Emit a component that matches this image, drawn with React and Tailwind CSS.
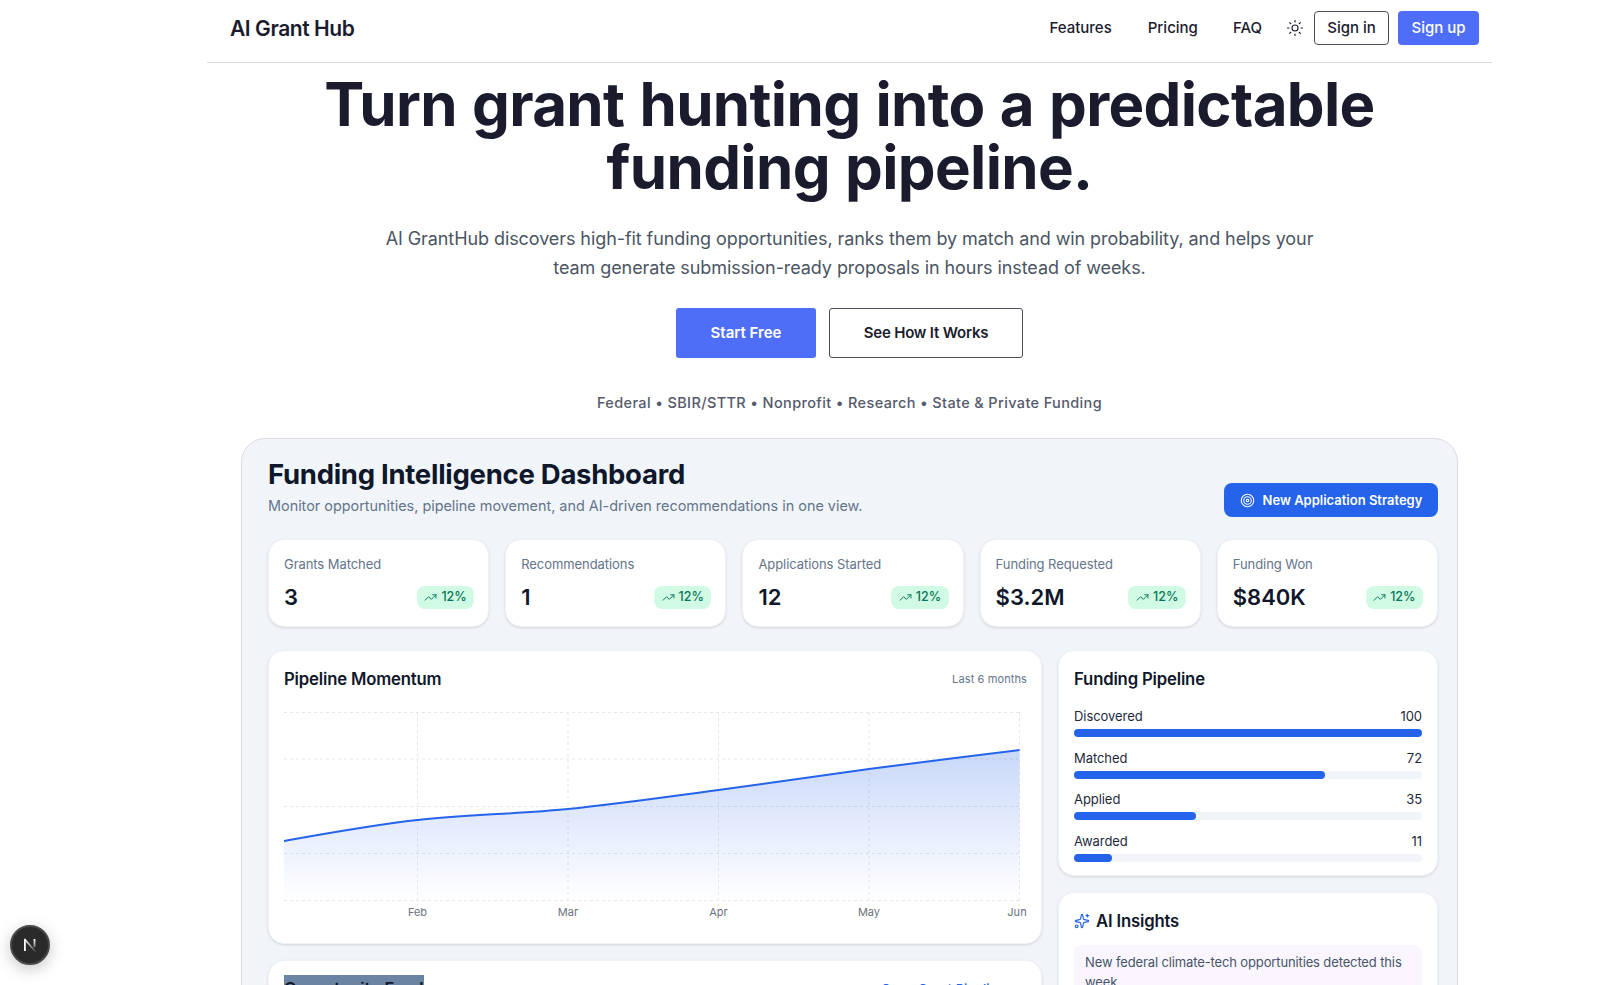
import React from "react";
import { Sun, TrendingUp, Target, Sparkles, ArrowRight } from "lucide-react";

const stats = [
  ["Grants Matched", "3"],
  ["Recommendations", "1"],
  ["Applications Started", "12"],
  ["Funding Requested", "$3.2M"],
  ["Funding Won", "$840K"],
];
const pipe = [
  ["Discovered", 100],
  ["Matched", 72],
  ["Applied", 35],
  ["Awarded", 11],
];

function Stat({ label, value }) {
  return (
    <div className="h-[88px] rounded-2xl bg-white border border-[#eef2f7] shadow-sm pl-[15px] pr-[14px] pt-[15px]">
      <div className="text-[13px] leading-[18px] tracking-[-0.005em] text-[#64748b]">{label}</div>
      <div className="mt-[9px] flex items-center justify-between">
        <div className="text-[22px] leading-[30px] font-semibold text-[#0f172a]">{value}</div>
        <div className="flex h-[23px] items-center gap-[4px] rounded-lg bg-[#d1fae5] px-[7.5px] text-[12.5px] font-medium text-[#047857]">
          <TrendingUp size={13} strokeWidth={1.75} />
          12%
        </div>
      </div>
    </div>
  );
}

function Chart() {
  const xs = [417.5, 568, 718.5, 869, 1019.5].map((x) => x - 284);
  const ys = [47, 94.5, 141.5, 188.5];
  const line =
    "M0 129 C44.5 121 89 112.9 133.5 108 C183.7 102.5 233.8 102 284 97 C334.2 92 384.3 84.7 434.5 78 C484.7 71.3 534.8 63.8 585 57 C635.2 50.2 685.3 44.3 735.5 38";
  return (
    <svg width="760" height="210" className="mt-[20px] block overflow-visible">
      <defs>
        <linearGradient id="fillArea" x1="0" y1="0" x2="0" y2="1">
          <stop offset="0%" stopColor="#2563eb" stopOpacity="0.25" />
          <stop offset="100%" stopColor="#2563eb" stopOpacity="0" />
        </linearGradient>
      </defs>
      <g stroke="#e5e7eb" strokeDasharray="3 3" fill="none">
        <line x1="0" x2="735.5" y1="0.5" y2="0.5" />
        {ys.map((y) => (
          <line key={y} x1="0" x2="735.5" y1={y} y2={y} />
        ))}
        {xs.map((x) => (
          <line key={x} x1={x} x2={x} y1="0" y2="194" />
        ))}
      </g>
      <path d={line + " L735.5 188.5 L0 188.5 Z"} fill="url(#fillArea)" />
      <path d={line} fill="none" stroke="#2563eb" strokeWidth="2" />
      <g fill="#6b7280" fontSize="11" textAnchor="middle" fontFamily="Inter, sans-serif">
        <text x="133.5" y="204">Feb</text>
        <text x="284" y="204">Mar</text>
        <text x="434.5" y="204">Apr</text>
        <text x="585" y="204">May</text>
        <text x="733" y="204">Jun</text>
      </g>
    </svg>
  );
}

function NextBadge() {
  return (
    <div className="fixed left-[10px] top-[925px] flex h-[40px] w-[40px] items-center justify-center rounded-full border-2 border-[#4a4a4a] bg-[#2a2a2a] shadow-[0_4px_16px_rgba(0,0,0,0.22)]">
      <svg width="20" height="20" viewBox="0 0 20 20" fill="none">
        <defs>
          <linearGradient id="nDiag" x1="5" y1="4" x2="15" y2="16" gradientUnits="userSpaceOnUse">
            <stop offset="0%" stopColor="#fff" />
            <stop offset="100%" stopColor="#fff" stopOpacity="0.15" />
          </linearGradient>
          <linearGradient id="nRight" x1="14" y1="4" x2="14" y2="12" gradientUnits="userSpaceOnUse">
            <stop offset="0%" stopColor="#fff" />
            <stop offset="100%" stopColor="#fff" stopOpacity="0.4" />
          </linearGradient>
        </defs>
        <path d="M4.9 16V4" stroke="#fff" strokeWidth="1.8" />
        <path d="M4.4 4 L15.5 16.5" stroke="url(#nDiag)" strokeWidth="1.8" />
        <path d="M14.5 4V12" stroke="url(#nRight)" strokeWidth="1.8" />
      </svg>
    </div>
  );
}

export default function App() {
  return (
    <div className="relative h-[985px] overflow-hidden bg-white font-['Inter',sans-serif] text-[#1a1c2e]">
      <div className="ml-[207px] w-[1285px]">
        <header className="flex h-[63px] items-center justify-between border-b border-[#d9d9dc] pb-[7px] pl-[23px] pr-[13px]">
          <div className="mt-[2px] text-[21px] font-semibold tracking-[-0.02em]">AI Grant Hub</div>
          <div className="flex items-center text-[15px] font-medium">
            <a className="pt-[2px]">Features</a>
            <a className="ml-[36px] pt-[2px]">Pricing</a>
            <a className="ml-[35px] pt-[2px]">FAQ</a>
            <Sun size={18} strokeWidth={1.5} className="ml-[24px]" />
            <button className="ml-[10px] h-[34px] w-[75px] rounded-[4px] border border-[#4b4d5e] pt-[1px]">Sign in</button>
            <button className="ml-[9px] h-[34px] w-[81px] rounded-[4px] bg-[#4f6ef7] pt-[1px] text-white">Sign up</button>
          </div>
        </header>

        <section className="flex flex-col items-center">
          <h1 className="mt-[10px] w-[1100px] text-center text-[60px] font-bold leading-[63px] tracking-[-0.65px] [word-spacing:1.5px]">
            Turn grant hunting into a predictable funding pipeline.
          </h1>
          <p className="mt-[25px] w-[960px] text-center text-[18px] leading-[29px] tracking-[-0.08px] text-[#4b5563]">
            AI GrantHub discovers high-fit funding opportunities, ranks them by match and win probability, and helps your team generate submission-ready proposals in hours instead of weeks.
          </p>
          <div className="mt-[26px] flex gap-[13px]">
            <button className="h-[50px] w-[140px] rounded-[3px] bg-[#4f6ef7] text-[15px] font-semibold text-white">Start Free</button>
            <button className="h-[50px] w-[194px] rounded-[3px] border border-[#4b4d5e] text-[15px] font-semibold tracking-[-0.2px]">See How It Works</button>
          </div>
          <div className="mt-[36px] text-[14.5px] font-medium leading-[18px] tracking-[0.025em] text-[#555a6b]">
            Federal • SBIR/STTR • Nonprofit • Research • State &amp; Private Funding
          </div>
        </section>

        <section className="ml-[34px] mt-[26px] w-[1217px] rounded-3xl border border-[#d9dde3] bg-[#f1f5f9] pl-[26px] pr-[19px] pt-[18px]">
          <div className="flex items-end justify-between">
            <div>
              <h2 className="text-[27.5px] font-bold leading-[34px] tracking-[-0.01em] text-[#0f172a]">Funding Intelligence Dashboard</h2>
              <p className="mt-[4px] text-[14.4px] leading-[22px] text-[#64748b]">Monitor opportunities, pipeline movement, and AI-driven recommendations in one view.</p>
            </div>
            <button className="flex h-[34px] w-[214px] items-center justify-center gap-[8px] rounded-lg bg-[#2563eb] pt-[1px] text-[13px] font-semibold text-white">
              <Target size={15} strokeWidth={1.75} />
              New Application Strategy
            </button>
          </div>

          <div className="mt-[22px] grid grid-cols-5 gap-[16px]">
            {stats.map(([l, v]) => (
              <Stat key={l} label={l} value={v} />
            ))}
          </div>

          <div className="mt-[23px] grid grid-cols-[774px_380px] gap-[16px]">
            <div className="flex flex-col gap-[16px]">
              <div className="h-[294px] rounded-2xl border border-[#eef2f7] bg-white pl-[15px] pr-[14px] pt-[15px] shadow-sm">
                <div className="flex items-center justify-between">
                  <div className="text-[16.7px] font-semibold leading-[26px] tracking-[-0.01em] text-[#0f172a]">Pipeline Momentum</div>
                  <div className="text-[11px] tracking-[0.01em] text-[#64748b]">Last 6 months</div>
                </div>
                <Chart />
              </div>
              <div className="h-[200px] rounded-2xl border border-[#eef2f7] bg-white pl-[15px] pr-[14px] pt-[14px] shadow-sm">
                <div className="flex items-start justify-between">
                  <div className="bg-[#6b84a3] text-[16.5px] font-semibold leading-[26px] text-[#0f172a]">Opportunity Feed</div>
                  <div className="flex items-center gap-[8px] pt-[5px] text-[13px] font-medium text-[#2563eb]">
                    Open Grant Pipeline
                    <ArrowRight size={14} />
                  </div>
                </div>
              </div>
            </div>

            <div className="flex flex-col gap-[16px]">
              <div className="h-[226px] rounded-2xl border border-[#eef2f7] bg-white pl-[15px] pr-[15px] pt-[15px] shadow-sm">
                <div className="text-[16.7px] font-semibold leading-[26px] tracking-[-0.01em] text-[#0f172a]">Funding Pipeline</div>
                <div className="mt-[15px] flex flex-col gap-[11.5px]">
                  {pipe.map(([n, v]) => (
                    <div key={n}>
                      <div className="flex justify-between text-[13px] leading-[18px] tracking-[-0.005em] text-[#1e293b]">
                        <span>{n}</span>
                        <span>{v}</span>
                      </div>
                      <div className="mt-[4px] h-[8px] rounded-full bg-[#f1f5f9]">
                        <div className="h-full rounded-full bg-[#2563eb]" style={{ width: `${v}%` }} />
                      </div>
                    </div>
                  ))}
                </div>
              </div>
              <div className="h-[200px] rounded-2xl border border-[#eef2f7] bg-white pl-[15px] pr-[15px] pt-[15px] shadow-sm">
                <div className="flex items-center gap-[6px]">
                  <Sparkles size={16} strokeWidth={1.75} className="text-[#2563eb]" />
                  <div className="text-[16.7px] font-semibold leading-[26px] tracking-[-0.01em] text-[#0f172a]">AI Insights</div>
                </div>
                <div className="mt-[11px] rounded-lg bg-[#faf5ff] px-[11px] py-[7px] text-[13px] leading-[20px] tracking-[-0.01em] text-[#475569]">
                  New federal climate-tech opportunities detected this week.
                </div>
              </div>
            </div>
          </div>
        </section>
      </div>
      <NextBadge />
    </div>
  );
}
